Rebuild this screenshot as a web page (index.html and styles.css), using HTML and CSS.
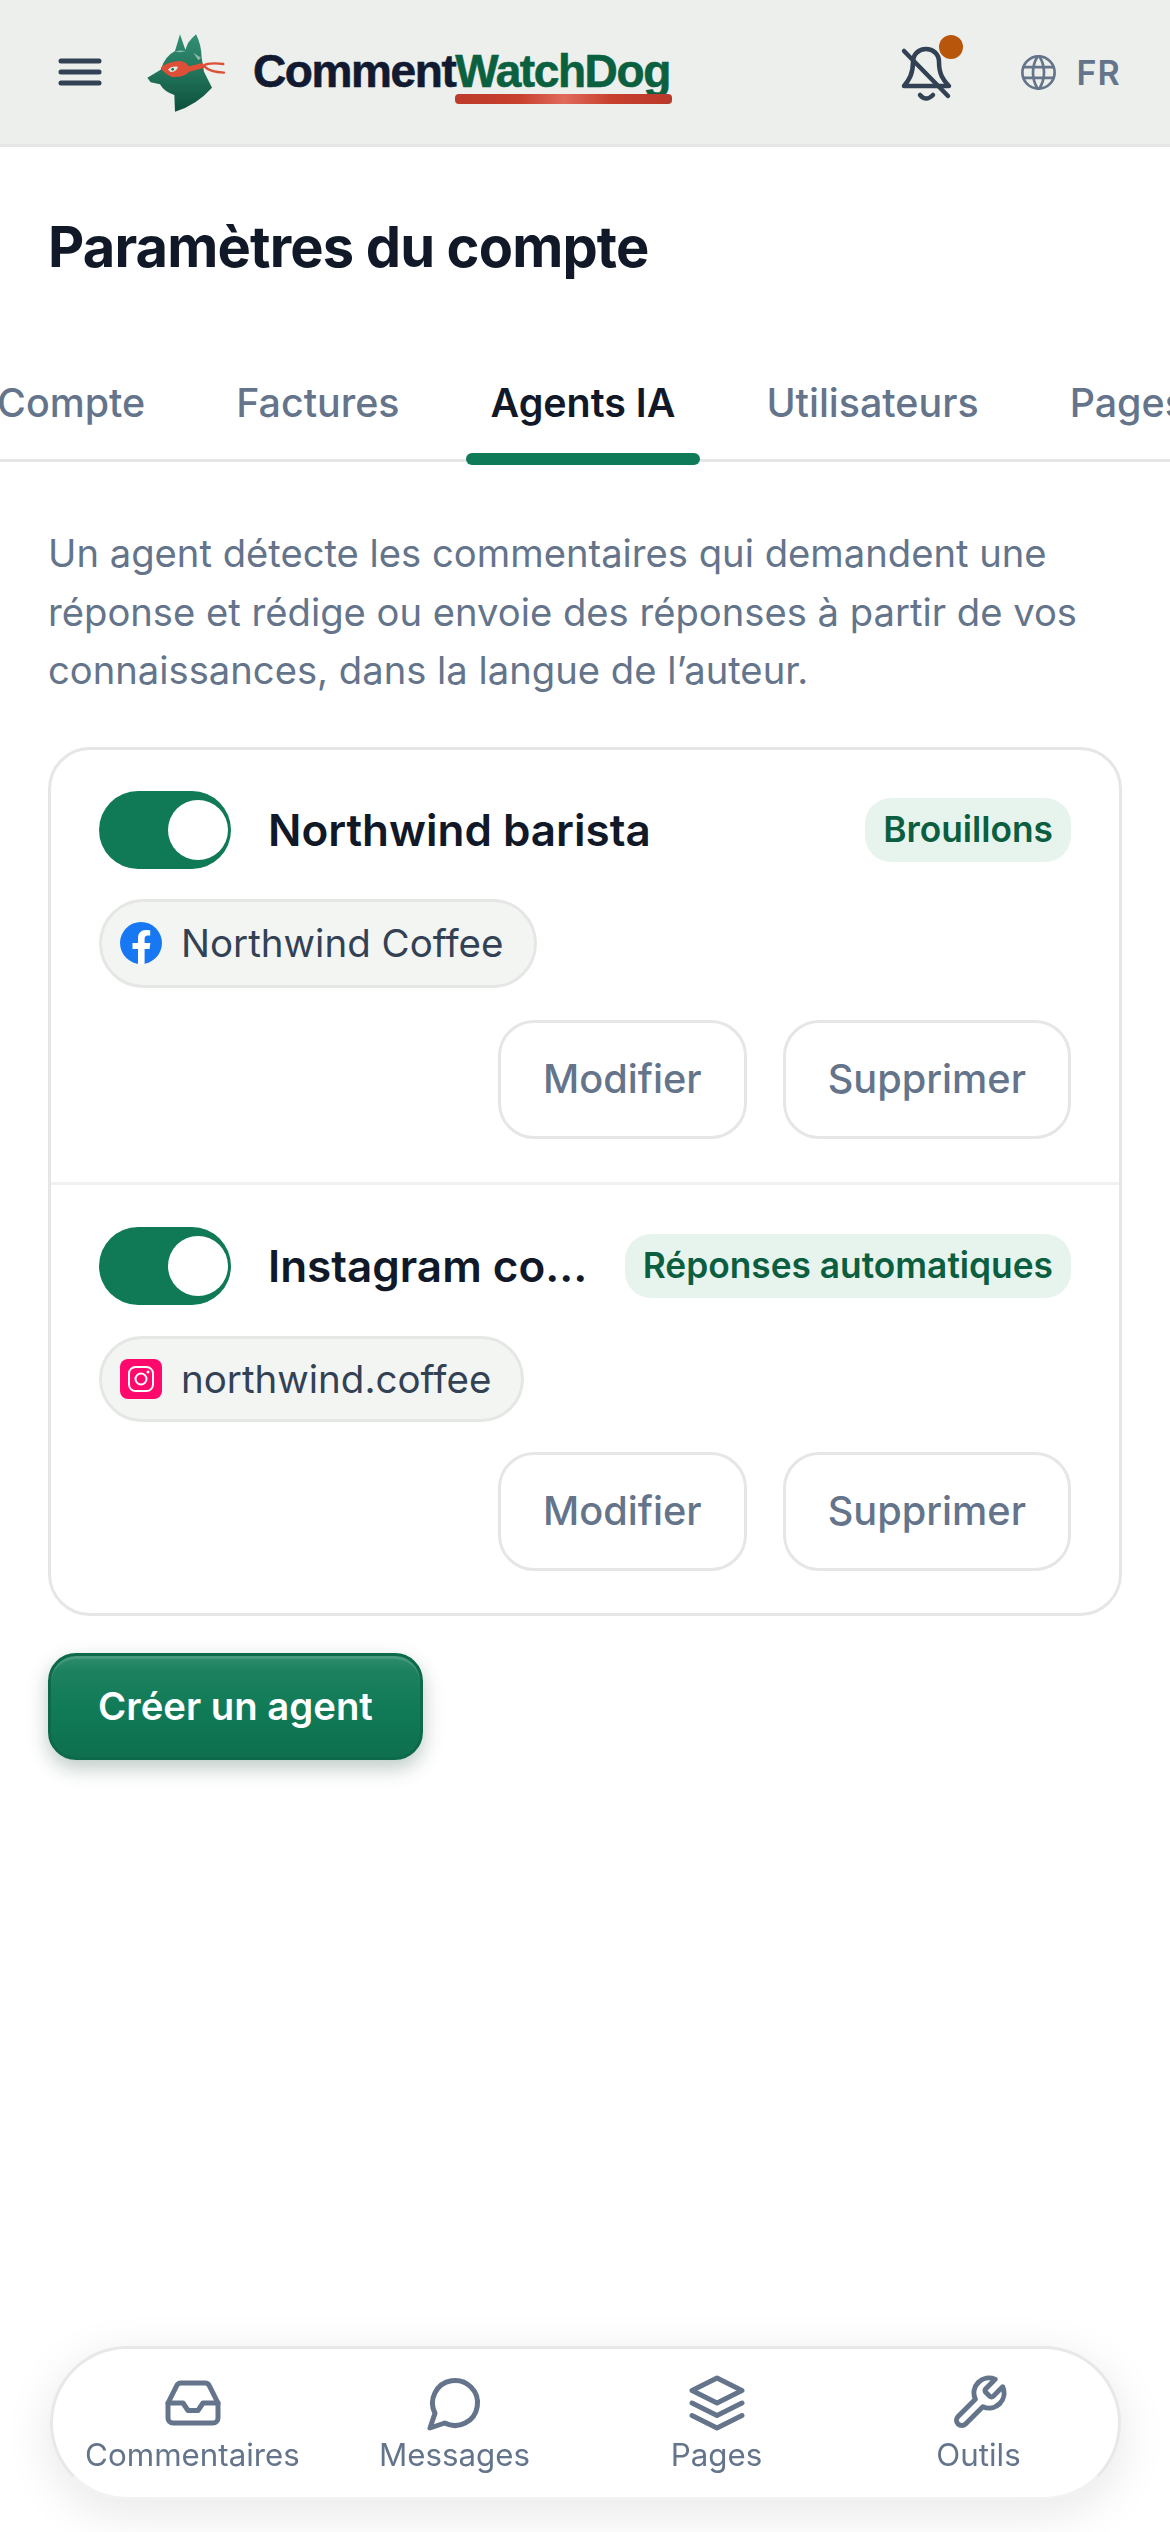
FILE: index.html
```html
<!DOCTYPE html>
<html lang="fr">
<head>
<meta charset="utf-8">
<title>CommentWatchDog</title>
<link rel="stylesheet" href="styles.css">
</head>
<body>
<header class="topbar">
  <button class="menu-btn" aria-label="Menu">
    <svg class="menu-icon" viewBox="0 0 44 30"><path d="M3 4h38M3 15h38M3 26h38"/></svg>
  </button>
  <svg class="logo" viewBox="0 0 390 300" aria-hidden="true">
    <defs>
      <linearGradient id="dog" x1="0" y1="0" x2="0" y2="1">
        <stop offset="0" stop-color="#338f74"/>
        <stop offset=".5" stop-color="#21735a"/>
        <stop offset="1" stop-color="#0d503c"/>
      </linearGradient>
    </defs>
    <path fill="url(#dog)" d="M135 272 L133 222 Q102 212 90 190 L62 184 L52 170 L92 146 Q104 106 135 90 L150 40 L166 86 L174 66 Q186 50 198 40 Q214 70 215 110 L222 152 L246 200 Q200 252 135 272Z"/>
    <path fill="#e5e9e4" opacity=".55" d="M135 92 Q150 86 168 90 L150 94Z M190 95 L213 110 L205 118Z"/>
    <path fill="#de4f38" d="M92 140 Q112 122 148 120 Q170 122 176 136 L218 126 L224 140 L178 152 Q160 170 128 168 Q104 160 92 140Z"/>
    <path fill="none" stroke="#de4f38" stroke-width="7" stroke-linecap="round" d="M220 134 Q236 124 280 129M220 134 Q240 154 282 155"/>
    <path fill="#dfe9e2" d="M114 146 Q124 134 144 137 Q140 152 122 153Z"/>
    <circle cx="128" cy="145" r="4" fill="#1c6a52"/>
  </svg>
  <div class="wordmark"><span class="wm-dark">Comment</span><span class="wm-green">WatchDog</span></div>
  <div class="top-actions">
    <div class="bell-wrap">
      <svg class="bell" viewBox="0 0 56 64"><path d="M14 18C14 10 20 5 27 5S40 10 40 18C40 30 44 36 50 42H5C10 36 14 30 14 18Z"/><path d="M5 7 49 52M21 51Q27 58 34 51"/></svg>
      <span class="bell-dot"></span>
    </div>
    <div class="lang">
      <svg class="globe" viewBox="0 0 24 24"><circle cx="12" cy="12" r="9"/><path d="M3.6 9h16.8M3.6 15h16.8M11.5 3a17 17 0 0 0 0 18M12.5 3a17 17 0 0 1 0 18"/></svg>
      <span>FR</span>
    </div>
  </div>
</header>

<main>
  <h1 class="page-title">Paramètres du compte</h1>

  <nav class="tabs">
    <div class="tab-strip">
      <a class="tab">Compte</a>
      <a class="tab">Factures</a>
      <a class="tab tab-active">Agents IA</a>
      <a class="tab">Utilisateurs</a>
      <a class="tab">Pages</a>
    </div>
  </nav>

  <section class="content">
    <p class="intro">Un agent détecte les commentaires qui demandent une réponse et rédige ou envoie des réponses à partir de vos connaissances, dans la langue de l’auteur.</p>

    <div class="card">
      <article class="agent">
        <div class="agent-head">
          <span class="toggle"><span class="knob"></span></span>
          <h2 class="agent-name">Northwind barista</h2>
          <span class="badge">Brouillons</span>
        </div>
        <div class="chip chip-fb">
          <svg class="chip-icon" viewBox="0 0 42 42"><circle cx="21" cy="21" r="21" fill="#1877f2"/><path fill="#fff" d="M18 42V27h-5.500v-6H18v-4.600C18 11 21.200 8 26 8c2.300 0 4.200.4 4.200.4v5H28c-2.600 0-3.400 1.600-3.400 3.300V21h5.800l-.9 6h-4.900v15Z"/></svg>
          <span>Northwind Coffee</span>
        </div>
        <div class="agent-actions">
          <button class="btn btn-edit">Modifier</button>
          <button class="btn btn-del">Supprimer</button>
        </div>
      </article>
      <article class="agent agent-second">
        <div class="agent-head">
          <span class="toggle"><span class="knob"></span></span>
          <h2 class="agent-name">Instagram commentaires</h2>
          <span class="badge">Réponses automatiques</span>
        </div>
        <div class="chip chip-ig">
          <svg class="chip-icon ig" viewBox="0 0 42 40"><rect width="42" height="40" rx="8" fill="#ff0a6c"/><rect x="9" y="8" width="24" height="24" rx="6.500" fill="none" stroke="#fff" stroke-width="2"/><circle cx="21" cy="20" r="5.500" fill="none" stroke="#fff" stroke-width="2"/><circle cx="28" cy="13" r="1.500" fill="#fff"/></svg>
          <span>northwind.coffee</span>
        </div>
        <div class="agent-actions agent-actions-tight">
          <button class="btn btn-edit">Modifier</button>
          <button class="btn btn-del">Supprimer</button>
        </div>
      </article>
    </div>

    <button class="create-btn">Créer un agent</button>
  </section>
</main>

<nav class="bottom-nav">
  <a class="nav-item">
    <svg class="nav-icon" viewBox="0 0 24 24"><path d="M22 12h-6l-2 3h-4l-2-3H2"/><path d="M5.450 5.110 2 12v6a2 2 0 0 0 2 2h16a2 2 0 0 0 2-2v-6l-3.450-6.890A2 2 0 0 0 16.760 4H7.240a2 2 0 0 0-1.790 1.110z"/></svg>
    <span>Commentaires</span>
  </a>
  <a class="nav-item">
    <svg class="nav-icon" viewBox="0 0 24 24"><path d="M7.900 20A9 9 0 1 0 4 16.100L2 22Z"/></svg>
    <span>Messages</span>
  </a>
  <a class="nav-item">
    <svg class="nav-icon" viewBox="0 0 24 24"><path d="M12 2 2 7l10 5 10-5-10-5Z"/><path d="m2 17 10 5 10-5M2 12l10 5 10-5"/></svg>
    <span>Pages</span>
  </a>
  <a class="nav-item">
    <svg class="nav-icon" viewBox="0 0 24 24"><path d="M14.700 6.300a1 1 0 0 0 0 1.400l1.600 1.600a1 1 0 0 0 1.400 0l3.770-3.770a6 6 0 0 1-7.940 7.940l-6.910 6.910a2.120 2.120 0 0 1-3-3l6.910-6.910a6 6 0 0 1 7.940-7.940l-3.760 3.760z"/></svg>
    <span>Outils</span>
  </a>
</nav>
</body>
</html>
```
FILE: styles.css
```css
* { box-sizing: border-box; }
html, body { margin: 0; padding: 0; background: #fff; }
body { font-family: Inter, "Noto Sans", sans-serif; color: #111827; width: 1170px; height: 2532px; overflow: hidden; }
button { font-family: inherit; cursor: pointer; }

.topbar { height: 147px; background: #ecefeb; border-bottom: 3px solid #e5e7e4; display: flex; align-items: center; padding: 0 49px 0 58px; }
.menu-btn { border: 0; background: none; padding: 0; display: flex; }
.menu-icon { width: 44px; height: 30px; fill: none; stroke: #334155; stroke-width: 5; stroke-linecap: round; }
.logo { width: 130px; height: 100px; margin-left: 28px; margin-top: -2px; flex: none; }
.wordmark { position: relative; margin-left: -7px; font-family: "Liberation Sans", Arial, sans-serif; font-weight: 700; font-size: 46px; letter-spacing: -1.4px; line-height: 52px; margin-top: -2px; white-space: nowrap; -webkit-text-stroke: .6px currentColor; }
.wm-dark { color: #111a30; }
.wm-green { color: #0b6040; position: relative; display: inline-block; }
.wm-green::after { content: ""; position: absolute; left: 0; right: -2px; top: 49px; height: 10px; border-radius: 4px; background: linear-gradient(90deg, #bd3a2a, #c8402e 30%, #e06a5c 50%, #c8402e 72%, #b8392a); }
.top-actions { margin-left: auto; display: flex; align-items: center; }
.bell-wrap { position: relative; width: 56px; height: 64px; display: flex; margin-top: 8px; }
.bell { width: 56px; height: 64px; fill: none; stroke: #334155; stroke-width: 4.500; stroke-linecap: round; stroke-linejoin: round; }
.bell-dot { position: absolute; right: -8px; top: -9px; width: 24px; height: 24px; border-radius: 50%; background: #b8560b; }
.lang { display: flex; align-items: center; gap: 16px; margin-left: 62px; font-size: 34px; font-weight: 600; color: #64748b; letter-spacing: 1.200px; }
.globe { width: 43px; height: 43px; fill: none; stroke: #64748b; stroke-width: 1.500; stroke-linecap: round; stroke-linejoin: round; }

.page-title { margin: 66px 0 0 48px; font-size: 56px; line-height: 68px; font-weight: 700; letter-spacing: -.85px; color: #111827; }

.tabs { margin-top: 84px; height: 97px; border-bottom: 3px solid #e5e7e4; overflow-x: clip; overflow-y: visible; }
.tab-strip { display: flex; gap: 41px; margin-left: -28px; width: 1400px; }
.tab { position: relative; padding: 0 25px 18px; height: 94px; display: flex; align-items: center; font-size: 39.400px; font-weight: 500; color: #64748b; white-space: nowrap; }
.tab-active { color: #111827; font-weight: 600; }
.tab-active::after { content: ""; position: absolute; left: 0; right: 0; bottom: -6px; height: 12px; border-radius: 6px; background: #0f7a57; }

.content { padding: 0 48px; }
.intro { margin: 62px 0 0; font-size: 38.200px; line-height: 58.500px; color: #64748b; }

.card { margin-top: 47px; width: 1074px; border: 3px solid #e5e7e4; border-radius: 42px; }
.agent { padding: 41px 48px 43px; display: flex; flex-direction: column; align-items: flex-start; }
.agent-second { border-top: 3px solid #f0f1f0; padding-top: 42px; padding-bottom: 42px; }
.agent-head { display: flex; align-items: center; width: 100%; }
.toggle { flex: none; width: 132px; height: 78px; border-radius: 39px; background: #107a56; display: flex; align-items: center; justify-content: flex-end; padding-right: 3px; }
.knob { width: 60px; height: 60px; border-radius: 50%; background: #fff; }
.agent-name { flex: 1; min-width: 0; margin: 0 0 0 37px; font-size: 44px; line-height: 56px; font-weight: 600; color: #111827; white-space: nowrap; overflow: hidden; text-overflow: ellipsis; }
.badge { flex: none; margin-left: 36px; height: 64px; display: flex; align-items: center; padding: 0 18px; border-radius: 26px; background: #e7f4ee; color: #0b5f40; font-size: 35.300px; font-weight: 600; }

.chip { display: flex; align-items: center; gap: 19px; margin-top: 30px; padding: 0 30px 0 18px; border: 3px solid #e5e7e4; border-radius: 45px; background: #f3f5f3; font-size: 38.500px; color: #334155; }
.chip-fb { height: 89px; }
.chip-ig { height: 86px; margin-top: 31px; }
.chip-icon { flex: none; width: 42px; height: 42px; }
.chip-icon.ig { height: 40px; }

.agent-actions { display: flex; gap: 36px; align-self: flex-end; margin-top: 32px; }
.agent-actions-tight { margin-top: 30px; }
.btn { height: 119px; padding: 0 42px; border: 3px solid #e5e7e4; border-radius: 36px; background: #fff; color: #64748b; font-size: 39.700px; font-weight: 500; }

.create-btn { display: block; margin-top: 37px; width: 375px; height: 107px; border: 3px solid #0d6a49; border-radius: 28px; color: #fff; font-size: 38.300px; font-weight: 600; background: linear-gradient(180deg, #2f8e6c 0, #1d8160 14%, #107a56 55%, #0e6f4e 100%); box-shadow: inset 0 3px 0 rgba(255, 255, 255, .12), 0 8px 20px rgba(15, 60, 45, .28); }

.bottom-nav { position: fixed; left: 50px; top: 2346px; width: 1071px; height: 154px; display: grid; grid-template-columns: repeat(4, 262px); justify-content: center; background: #fff; border: 3px solid #e8e9e7; border-bottom-color: #f2f2f1; border-radius: 77px; box-shadow: 0 12px 48px rgba(17, 24, 39, .1); }
.nav-item { display: flex; flex-direction: column; align-items: center; padding-top: 24px; font-size: 31.300px; line-height: 40px; color: #64748b; }
.nav-icon { width: 60px; height: 60px; margin-bottom: 2px; fill: none; stroke: #64748b; stroke-width: 2; stroke-linecap: round; stroke-linejoin: round; }
```
